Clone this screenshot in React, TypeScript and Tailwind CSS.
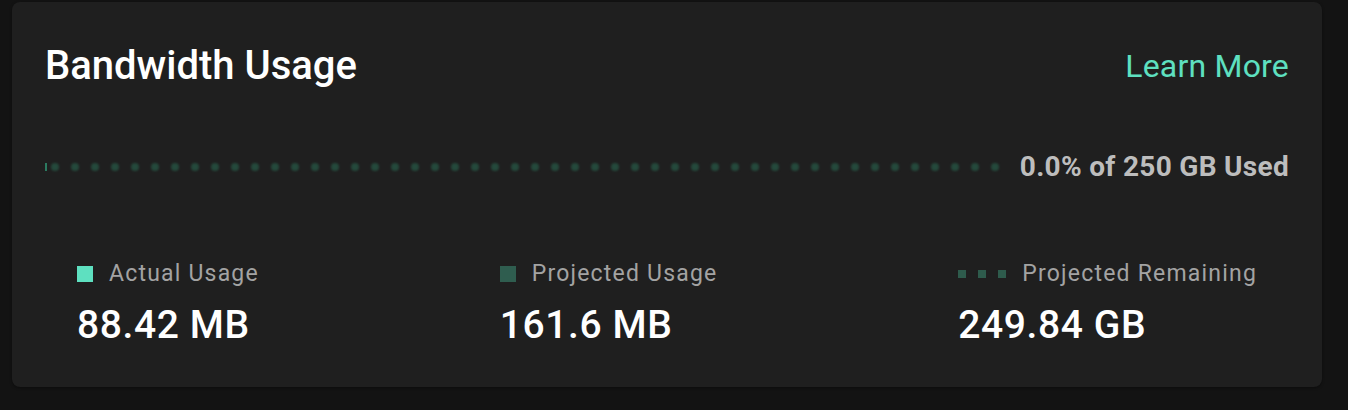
const dots = Array.from({ length: 48 });

const legend = [
  { label: "Actual Usage", value: "88.42 MB", kind: "actual" },
  { label: "Projected Usage", value: "161.6 MB", kind: "projected" },
  { label: "Projected Remaining", value: "249.84 GB", kind: "remaining" },
];

const Swatch = ({ kind }: { kind: string }) => {
  if (kind === "remaining") {
    return (
      <div className="flex items-center gap-3">
        <span className="w-2 h-2 bg-[#2e5b4c]" />
        <span className="w-2 h-2 bg-[#2e5b4c]" />
        <span className="w-2 h-2 bg-[#2e5b4c]" />
      </div>
    );
  }
  return (
    <span
      className={
        kind === "actual"
          ? "w-4 h-4 bg-[#5ee0c0]"
          : "w-4 h-4 bg-[#2f5d4f]"
      }
    />
  );
};

const App = () => {
  return (
    <div
      className="w-[1348px] h-[410px] bg-[#131313] pt-[2px] pl-[12px]"
      style={{ fontFamily: "Roboto, 'Noto Sans', sans-serif" }}
    >
      <div className="w-[1310px] h-[385px] bg-[#1f1f1f] rounded-lg px-[33px] pt-[42px] shadow-[0_1px_3px_rgba(0,0,0,0.4)]">
        <div className="flex items-start justify-between">
          <h2 className="text-[40px] leading-[44px] font-medium text-white">
            Bandwidth Usage
          </h2>
          <a className="text-[32px] leading-[44px] text-[#5ee0c0] tracking-[0.2px]">Learn More</a>
        </div>

        <div className="flex items-center mt-[63px] h-8">
          <div className="flex-1 flex items-center">
            <span className="w-[2px] h-2 bg-[#2b7a60]" />
            <div className="flex items-center gap-3 ml-1">
              {dots.map((_, i) => (
                <span key={i} className="w-2 h-2 rounded-full bg-[#25493c] blur-[1px]" />
              ))}
            </div>
          </div>
          <span className="text-[28px] leading-8 font-bold text-[#bdbdbd] tracking-[0.3px]">
            0.0% of 250 GB Used
          </span>
        </div>

        <div className="flex justify-between px-8 mt-[78px]">
          {legend.map((item) => (
            <div key={item.label}>
              <div className="flex items-center gap-4">
                <Swatch kind={item.kind} />
                <span className="text-[23px] leading-[26px] text-[#a3a3a3] tracking-[1.2px]">
                  {item.label}
                </span>
              </div>
              <div className="mt-[16px] text-[39px] leading-[44px] font-medium text-white tracking-[0.6px]">
                {item.value}
              </div>
            </div>
          ))}
        </div>
      </div>
    </div>
  );
};

export default App;
